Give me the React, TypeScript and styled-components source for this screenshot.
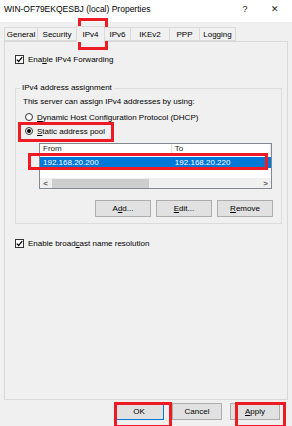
import React from "react";
import styled, { createGlobalStyle } from "styled-components";

const GlobalStyle = createGlobalStyle`
  html, body {
    margin: 0;
    padding: 0;
    background: #f0f0f0;
  }
  * {
    box-sizing: border-box;
  }
`;

const Window = styled.div`
  position: relative;
  width: 292px;
  height: 426px;
  overflow: hidden;
  background: #f0f0f0;
  font-family: "Liberation Sans", Arial, sans-serif;
  font-size: 8px;
  color: #000;
`;

const TitleBar = styled.div`
  height: 22px;
  background: #fff;
  display: flex;
  align-items: center;
  padding: 0 0 4px 4px;
`;

const TitleText = styled.div`
  font-size: 8.5px;
  flex: 1;
  white-space: nowrap;
`;

const TitleButton = styled.div<{ $w: number }>`
  width: ${({ $w }) => $w}px;
  text-align: center;
  font-size: 9px;
  color: #222;
`;

const Body = styled.div`
  padding: 5px 4px 0 4px;
`;

const TabStrip = styled.div`
  display: flex;
  height: 14px;
  align-items: flex-end;
  padding-left: 1px;
`;

const Tab = styled.div<{ $w: number; $active?: boolean }>`
  width: ${({ $w }) => $w}px;
  height: ${({ $active }) => ($active ? 16 : 14)}px;
  margin-left: -1px;
  margin-bottom: ${({ $active }) => ($active ? -1 : 0)}px;
  border: 1px solid #d9d9d9;
  border-bottom: ${({ $active }) => ($active ? "none" : "1px solid #d9d9d9")};
  background: #f0f0f0;
  display: flex;
  align-items: center;
  justify-content: center;
  position: relative;
  z-index: ${({ $active }) => ($active ? 2 : 1)};
  white-space: nowrap;
`;

const Panel = styled.div`
  height: 359px;
  border: 1px solid #d9d9d9;
  padding: 12px 6px 0 10px;
`;

const CheckRow = styled.div<{ $mt?: number }>`
  display: flex;
  align-items: center;
  height: 10px;
  margin-top: ${({ $mt }) => $mt ?? 0}px;
  white-space: nowrap;
`;

const CheckBox = styled.div`
  width: 9px;
  height: 9px;
  border: 1px solid #333;
  background: #fff;
  margin-right: 4px;
  display: flex;
  align-items: center;
  justify-content: center;
`;

const GroupBox = styled.div`
  position: relative;
  margin-top: 24px;
  width: 267px;
  border: 1px solid #dcdcdc;
  padding: 8px 8px 6px 7px;
`;

const GroupLabel = styled.div`
  position: absolute;
  top: -6px;
  left: 4px;
  padding: 0 2px;
  background: #f0f0f0;
  line-height: 10px;
  white-space: nowrap;
`;

const Line = styled.div`
  height: 10px;
  line-height: 10px;
  white-space: nowrap;
`;

const RadioRow = styled.div<{ $mt?: number }>`
  display: flex;
  align-items: center;
  height: 10px;
  margin-top: ${({ $mt }) => $mt ?? 0}px;
  margin-left: 2px;
  white-space: nowrap;
`;

const Radio = styled.div<{ $on?: boolean }>`
  width: 8px;
  height: 8px;
  border-radius: 50%;
  border: 1px solid #333;
  background: #fff;
  margin-right: 4px;
  display: flex;
  align-items: center;
  justify-content: center;
  &::after {
    content: "";
    width: 4px;
    height: 4px;
    border-radius: 50%;
    background: ${({ $on }) => ($on ? "#000" : "transparent")};
  }
`;

const ListView = styled.div`
  margin-top: 7px;
  margin-left: 16px;
  width: 233px;
  height: 46px;
  border: 1px solid #828790;
  background: #fff;
  display: flex;
  flex-direction: column;
`;

const ListHeader = styled.div`
  display: flex;
  height: 11px;
  line-height: 10px;
  color: #222;
`;

const HeaderCell = styled.div<{ $w: number }>`
  width: ${({ $w }) => $w}px;
  padding-left: 3px;
  border-right: 1px solid #e5e5e5;
`;

const ListRow = styled.div<{ $selected?: boolean }>`
  display: flex;
  height: 11px;
  line-height: 11px;
  margin-top: 2px;
  background: ${({ $selected }) => ($selected ? "#0078d7" : "#fff")};
  color: ${({ $selected }) => ($selected ? "#fff" : "#000")};
`;

const Cell = styled.div<{ $w: number }>`
  width: ${({ $w }) => $w}px;
  padding-left: 3px;
`;

const ScrollBar = styled.div`
  margin-top: auto;
  height: 10px;
  background: #f0f0f0;
  display: flex;
  align-items: center;
`;

const ScrollArrow = styled.div`
  width: 11px;
  text-align: center;
  font-size: 8px;
  color: #606060;
  font-weight: bold;
`;

const ScrollThumb = styled.div`
  width: 97px;
  height: 9px;
  margin-left: 1px;
  margin-right: auto;
  background: #cdcdcd;
`;

const ButtonRow = styled.div<{ $mt?: number; $gap: number }>`
  display: flex;
  justify-content: flex-end;
  gap: ${({ $gap }) => $gap}px;
  margin-top: ${({ $mt }) => $mt ?? 0}px;
`;

const Button = styled.div<{ $w: number; $default?: boolean }>`
  width: ${({ $w }) => $w}px;
  height: 17px;
  background: #e1e1e1;
  border: 1px solid ${({ $default }) => ($default ? "#0078d7" : "#adadad")};
  display: flex;
  align-items: center;
  justify-content: center;
  white-space: nowrap;
`;

const Footer = styled.div`
  padding: 3px 8px 0 0;
`;

const Marker = styled.div`
  position: absolute;
  border: 3px solid #ed1c24;
  pointer-events: none;
`;

const Check = () => (
  <svg width="7" height="7" viewBox="0 0 7 7">
    <path d="M0.8 3.6 L2.7 5.5 L6.2 1.2" fill="none" stroke="#000" strokeWidth="1.3" />
  </svg>
);

const tabs = [
  { label: "General", w: 34 },
  { label: "Security", w: 40 },
  { label: "IPv4", w: 29, active: true },
  { label: "IPv6", w: 27 },
  { label: "IKEv2", w: 40 },
  { label: "PPP", w: 31 },
  { label: "Logging", w: 37 },
];

const markers = [
  { x: 78, y: 18, w: 30, h: 32 },
  { x: 18, y: 122, w: 96, h: 20 },
  { x: 28, y: 153, w: 240, h: 17 },
  { x: 114, y: 402, w: 58, h: 26 },
  { x: 235, y: 402, w: 51, h: 26 },
];

export default function App() {
  return (
    <>
      <GlobalStyle />
      <Window>
        <TitleBar>
          <TitleText>WIN-OF79EKQESBJ (local) Properties</TitleText>
          <TitleButton $w={26}>?</TitleButton>
          <TitleButton $w={34}>✕</TitleButton>
        </TitleBar>
        <Body>
          <TabStrip>
            {tabs.map((t) => (
              <Tab key={t.label} $w={t.w} $active={t.active}>
                {t.label}
              </Tab>
            ))}
          </TabStrip>
          <Panel>
            <CheckRow>
              <CheckBox>
                <Check />
              </CheckBox>
              <span>
                Ena<u>b</u>le IPv4 Forwarding
              </span>
            </CheckRow>
            <GroupBox>
              <GroupLabel>IPv4 address assignment</GroupLabel>
              <Line>This server can assign IPv4 addresses by using:</Line>
              <RadioRow $mt={5}>
                <Radio />
                <span>
                  <u>D</u>ynamic Host Configuration Protocol (DHCP)
                </span>
              </RadioRow>
              <RadioRow $mt={4}>
                <Radio $on />
                <span>
                  <u>S</u>tatic address pool
                </span>
              </RadioRow>
              <ListView>
                <ListHeader>
                  <HeaderCell $w={133}>From</HeaderCell>
                  <HeaderCell $w={100}>To</HeaderCell>
                </ListHeader>
                <ListRow $selected>
                  <Cell $w={133}>192.168.20.200</Cell>
                  <Cell $w={100}>192.168.20.220</Cell>
                </ListRow>
                <ScrollBar>
                  <ScrollArrow>&lt;</ScrollArrow>
                  <ScrollThumb />
                  <ScrollArrow>&gt;</ScrollArrow>
                </ScrollBar>
              </ListView>
              <ButtonRow $mt={11} $gap={5}>
                <Button $w={56}>
                  A<u>d</u>d...
                </Button>
                <Button $w={56}>
                  <u>E</u>dit...
                </Button>
                <Button $w={56}>
                  <u>R</u>emove
                </Button>
              </ButtonRow>
            </GroupBox>
            <CheckRow $mt={14}>
              <CheckBox>
                <Check />
              </CheckBox>
              <span>
                Enable broad<u>c</u>ast name resolution
              </span>
            </CheckRow>
          </Panel>
          <Footer>
            <ButtonRow $gap={8}>
              <Button $w={50} $default>
                OK
              </Button>
              <Button $w={50}>Cancel</Button>
              <Button $w={50}>
                <u>A</u>pply
              </Button>
            </ButtonRow>
          </Footer>
        </Body>
        {markers.map((m, i) => (
          <Marker key={i} style={{ left: m.x, top: m.y, width: m.w, height: m.h }} />
        ))}
      </Window>
    </>
  );
}
